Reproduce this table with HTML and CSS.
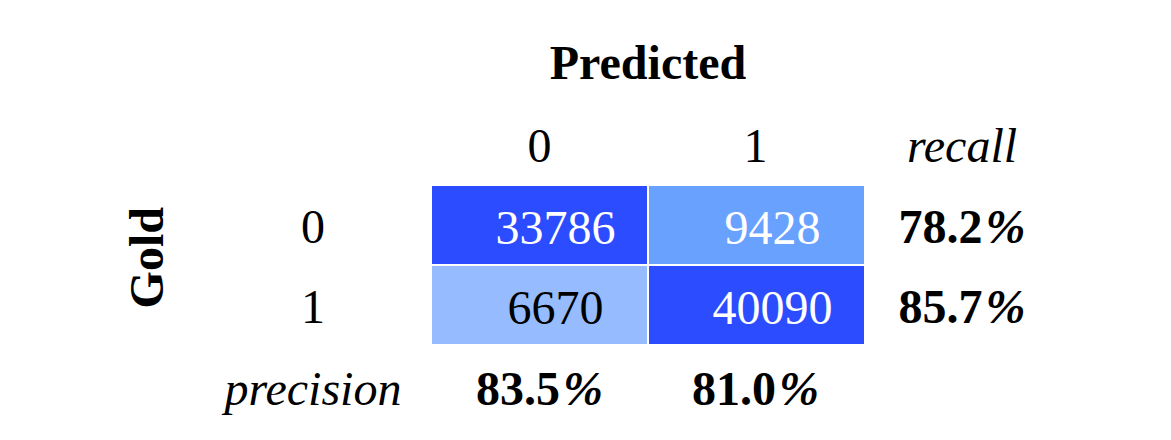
FILE: index.html
```html
<!DOCTYPE html>
<html>
<head>
<title>Confusion matrix</title>
<link rel="stylesheet" href="styles.css">
</head>
<body>

  <div class="matrix">

    <div class="title">Predicted</div>

    <div class="colhead c0">0</div>
    <div class="colhead c1">1</div>
    <div class="colhead c2 it">recall</div>

    <div class="gold"><span>Gold</span></div>

    <div class="rowhead r0">0</div>
    <div class="cell r0 c0 dark">33786</div>
    <div class="cell r0 c1 mid">9428</div>
    <div class="score r0 c2">78.2<i>%</i></div>

    <div class="rowhead r1">1</div>
    <div class="cell r1 c0 light">6670</div>
    <div class="cell r1 c1 dark">40090</div>
    <div class="score r1 c2">85.7<i>%</i></div>

    <div class="rowhead r2 it">precision</div>
    <div class="score r2 c0">83.5<i>%</i></div>
    <div class="score r2 c1">81.0<i>%</i></div>

  </div>

</body>
</html>
```

FILE: styles.css
```css
body {
  margin: 0;
  background: #ffffff;
  color: #000000;
  font-family: "Liberation Serif", "Times New Roman", serif;
  font-size: 48px;
}

.matrix {
  display: grid;
  grid-template-columns: 94px 238px 215px 217px 196px;
  grid-template-rows: 83px 70px 80px 78px 90px;
  padding: 33px 0 0 100px;
  align-items: start;
  text-align: center;
}

.title {
  grid-column: 3 / 5;
  grid-row: 1;
  font-weight: bold;
  line-height: 60px;
}

.colhead {
  grid-row: 2;
  line-height: 60px;
}

.it {
  font-style: italic;
}

.c0 { grid-column: 3; }
.c1 { grid-column: 4; }
.c2 { grid-column: 5; }
.r0 { grid-row: 3; }
.r1 { grid-row: 4; }
.r2 { grid-row: 5; }

.gold {
  grid-column: 1;
  grid-row: 3 / 5;
  align-self: stretch;
  display: flex;
  justify-content: center;
  align-items: center;
  font-weight: bold;
}

.gold span {
  writing-mode: vertical-rl;
  transform: rotate(180deg);
  line-height: 1;
  margin-top: -14px;
}

.rowhead {
  grid-column: 2;
  line-height: 78px;
  padding-top: 2px;
}

.rowhead.r2 {
  line-height: 90px;
  padding-top: 0;
}

.cell {
  height: 78px;
  line-height: 78px;
  padding: 3px 0 0 32px;
  box-sizing: border-box;
  width: 215px;
}

.cell.c1 {
  margin-left: 2px;
}

.dark {
  background: #2b4cff;
  color: #ffffff;
}

.mid {
  background: #69a1ff;
  color: #ffffff;
}

.light {
  background: #96bcff;
  color: #000000;
}

.score {
  font-weight: bold;
  line-height: 78px;
  padding-top: 2px;
}

.score i {
  margin-left: 3px;
}

.score.r2 {
  line-height: 90px;
  padding-top: 0;
}
```
